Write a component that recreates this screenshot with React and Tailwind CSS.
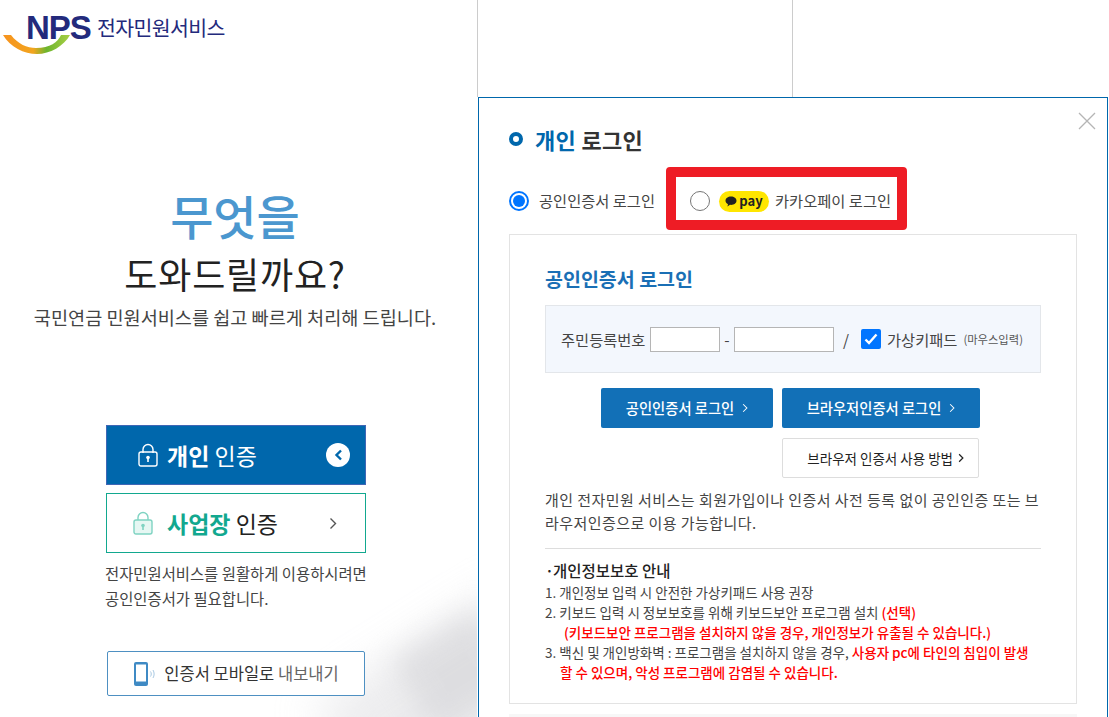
const F = { fontFamily: '"Noto Sans CJK KR", "Liberation Sans", sans-serif' };

const Lock = ({ color, body }) => (
  <svg width="20" height="24" viewBox="0 0 20 24" fill="none" className="shrink-0">
    <path d="M5 10V6.500a5 5 0 0 1 10 0V10" stroke={color} strokeWidth="1.400" />
    <rect x="1" y="9" width="18" height="14" rx="2" stroke={color} strokeWidth="1.400" fill={body} />
    <circle cx="10" cy="14.500" r="1.800" fill={color} />
    <rect x="9.200" y="15" width="1.600" height="4" fill={color} />
  </svg>
);

const Chevron = ({ className = "", color = "currentColor", w = 1.4 }) => (
  <svg viewBox="0 0 8 12" className={className} fill="none">
    <path d="M1.500 1l5 5-5 5" stroke={color} strokeWidth={w} />
  </svg>
);

function Logo() {
  return (
    <div className="relative h-[70px]">
      <svg width="80" height="60" viewBox="0 0 80 60" className="absolute left-0 top-0">
        <defs>
          <linearGradient id="sw" x1="0" x2="1" y1="0" y2="0">
            <stop offset="0" stopColor="#f7931e" />
            <stop offset="0.45" stopColor="#f2a51f" />
            <stop offset="0.65" stopColor="#6db52e" />
            <stop offset="1" stopColor="#a8cf45" />
          </linearGradient>
        </defs>
        <path d="M3 35h8c7 9 16 13 25 13 14 0 22-6 25-13h9c-6 11-20 19-33 19C24 54 10 47 3 35z" fill="url(#sw)" />
      </svg>
      <div className="absolute left-[26px] top-[10px] text-[33px] leading-[36px] font-bold tracking-[-1px] text-[#232a7c]" style={{ fontFamily: '"Liberation Sans", sans-serif' }}>NPS</div>
      <div className="absolute left-[97px] top-[11px] text-[20.500px] leading-[32px] tracking-[-0.6px] text-[#232a7c]">전자민원서비스</div>
    </div>
  );
}

function LeftColumn() {
  return (
    <aside className="relative w-[477px] shrink-0 overflow-hidden bg-white text-center">
      <div className="absolute right-[-80px] bottom-[-40px] h-[120px] w-[230px] rotate-[-32deg] bg-[#d2d2d6] opacity-40 blur-[22px]" />
      <div className="absolute right-[-30px] bottom-[0px] h-[90px] w-[100px] rotate-[-32deg] bg-[#cfcfd3] opacity-50 blur-[14px]" />
      <div className="relative">
        <div className="text-left"><Logo /></div>
        <div className="ml-[-4px] w-[478px]">
          <h1 className="mt-[113px] text-[47px] leading-[64px] font-medium text-[#4b97cf]">무엇을</h1>
          <p className="mt-[2px] text-[36px] leading-[48px] tracking-[0.8px] text-[#222]">도와드릴까요?</p>
          <p className="mt-[6px] text-[18.600px] leading-[28px] text-[#444]">국민연금 민원서비스를 쉽고 빠르게 처리해 드립니다.</p>
        </div>
        <div className="ml-[106px] mt-[94px] w-[260px]">
          <div className="flex h-[60px] items-center border border-[#3f66b5] bg-[#0067ac] pl-[31px] pr-[15px] text-white">
            <Lock color="#fff" />
            <span className="ml-[9px] text-[23px]"><b className="font-bold">개인</b> 인증</span>
            <span className="ml-auto flex h-[24px] w-[24px] items-center justify-center rounded-full bg-white">
              <svg width="9" height="12" viewBox="0 0 9 12" fill="none"><path d="M7 1.500L2.500 6 7 10.500" stroke="#0067ac" strokeWidth="2.400" /></svg>
            </span>
          </div>
          <div className="mt-[8px] flex h-[60px] items-center border border-[#12a88f] bg-white pl-[26px] pr-[28px] text-[#222]">
            <Lock color="#7fd3c2" body="#e6f7f3" />
            <span className="ml-[14px] text-[23px]"><b className="font-bold text-[#12a88f]">사업장</b> 인증</span>
            <Chevron className="ml-auto h-[13px] w-[8px]" color="#555" />
          </div>
          <p className="mt-[8px] ml-[-1px] w-[280px] text-left text-[15.400px] leading-[25px] text-[#444]">전자민원서비스를 원활하게 이용하시려면<br />공인인증서가 필요합니다.</p>
          <div className="mt-[40px] ml-[1px] flex h-[45px] w-[258px] items-center justify-center gap-[9px] rounded-[2px] border border-[#4e90c2] bg-white text-[16.500px] text-[#333]">
            <svg width="22" height="26" viewBox="0 0 22 26" fill="none" className="shrink-0">
              <rect x="1" y="1" width="14" height="24" rx="2" fill="#3f8ac4" />
              <rect x="3" y="3.500" width="10" height="17" fill="#fff" />
              <path d="M17.500 10.500c1 1.500 1 3.500 0 5M20 9c1.500 2.500 1.500 5.500 0 8" stroke="#a9c9e2" strokeWidth="1" />
            </svg>
            <span>인증서 모바일로 <span className="text-[#666]">내보내기</span></span>
          </div>
        </div>
      </div>
    </aside>
  );
}

function Radio({ checked }) {
  return checked ? (
    <span className="mt-[5px] flex h-[20px] w-[20px] shrink-0 items-center justify-center rounded-full border-2 border-[#0075ff] bg-white">
      <span className="h-[12px] w-[12px] rounded-full bg-[#0075ff]" />
    </span>
  ) : (
    <span className="mt-[5px] h-[20px] w-[20px] shrink-0 rounded-full border border-[#767676] bg-white" />
  );
}

function Panel() {
  return (
    <section className="relative ml-[1px] h-[620px] w-[630px] border-x border-t border-[#0067ac] bg-white pl-[30px]">
      <svg width="18" height="18" viewBox="0 0 18 18" className="absolute right-[11px] top-[14px]" fill="none">
        <path d="M1 1l16 16M17 1L1 17" stroke="#b5b5b5" strokeWidth="1.300" />
      </svg>
      <div className="mt-[10px] flex h-[42px] items-center pt-[20px]">
        <span className="h-[14px] w-[14px] rounded-full border-[4px] border-[#0067ac]" />
        <h2 className="ml-[12px] text-[22px] tracking-[0.3px] font-bold text-[#333]"><span className="text-[#0067ac]">개인</span> 로그인</h2>
      </div>
      <div className="mt-[17px] flex items-center">
        <Radio checked />
        <span className="ml-[10px] mt-[4px] text-[15.300px] text-[#444]">공인인증서 로그인</span>
        <div className="ml-[11px] flex h-[63px] w-[241px] items-center rounded-[4px] border-[10px] border-[#ee1c25] bg-white pl-[14px]">
          <Radio />
          <span className="ml-[9px] mt-[5px] flex h-[21px] w-[50px] shrink-0 items-center justify-center gap-[2px] rounded-full bg-[#ffe600] text-[13px] font-bold text-[#222]">
            <svg width="12" height="11" viewBox="0 0 12 11"><path d="M6 .5C2.900.5.500 2.300.5 4.700c0 1.500 1 2.800 2.500 3.500L2.400 10.500 5 8.800c.3 0 .7.100 1 .1 3.100 0 5.500-1.900 5.500-4.200S9.100.5 6 .5z" fill="#222" /></svg>
            pay
          </span>
          <span className="ml-[6px] mt-[4px] whitespace-nowrap text-[15.300px] text-[#444]">카카오페이 로그인</span>
        </div>
      </div>
      <div className="mt-[4px] h-[470px] w-[568px] border border-[#e3e3e3] px-[35px] pt-[28px]">
        <h3 className="text-[19.500px] leading-[32px] font-bold text-[#1a6fb5]">공인인증서 로그인</h3>
        <div className="mt-[10px] flex h-[68px] w-[496px] items-center whitespace-nowrap border border-[#e3e6ea] bg-[#f3f7fd] pl-[15px] text-[15.300px] text-[#444]">
          <span className="w-[84px]">주민등록번호</span>
          <span className="ml-[5px] h-[25px] w-[70px] border border-[#b5b5b5] bg-white" />
          <span className="mx-[4px] w-[6px] text-center">-</span>
          <span className="h-[25px] w-[100px] border border-[#b5b5b5] bg-white" />
          <span className="ml-[9px]">/</span>
          <span className="ml-[12px] flex h-[20px] w-[20px] items-center justify-center rounded-[2px] bg-[#0075ff]">
            <svg width="14" height="12" viewBox="0 0 14 12" fill="none"><path d="M1.500 6.500L5 10l7.500-8.500" stroke="#fff" strokeWidth="2.400" /></svg>
          </span>
          <span className="ml-[6px]">가상키패드</span>
          <span className="ml-[6px] text-[11.300px] text-[#555]">(마우스입력)</span>
        </div>
        <div className="mt-[15px] ml-[56px] grid w-[379px] grid-cols-[172px_198px] gap-x-[9px] gap-y-[10px]">
          <div className="flex h-[40px] items-center justify-center gap-[8px] rounded-[2px] bg-[#1270b7] text-[14.300px] font-medium text-white">공인인증서 로그인 <Chevron className="h-[10px] w-[6px]" color="#fff" /></div>
          <div className="flex h-[40px] items-center justify-center gap-[8px] rounded-[2px] bg-[#1270b7] text-[14.300px] font-medium text-white">브라우저인증서 로그인 <Chevron className="h-[10px] w-[6px]" color="#fff" /></div>
          <div className="col-start-2 flex h-[40px] w-[197px] items-center justify-end gap-[5px] rounded-[2px] border border-[#ddd] bg-white pr-[14px] text-[13.500px] text-[#222]">브라우저 인증서 사용 방법 <Chevron className="h-[10px] w-[6px]" color="#222" w={1.6} /></div>
        </div>
        <p className="mt-[10px] w-[496px] break-all text-[15px] leading-[23px] tracking-[0.45px] text-[#444]">개인 전자민원 서비스는 회원가입이나 인증서 사전 등록 없이 공인인증 또는 브라우저인증으로 이용 가능합니다.</p>
        <div className="mt-[14px] w-[496px] border-t border-[#ddd] pt-[10px] text-[13.500px] leading-[20px] text-[#444]">
          <p className="mb-[1px] text-[15.500px] leading-[22px] font-medium text-[#222]">·<span className="ml-[-1px]">개인정보보호 안내</span></p>
          <p>1. 개인정보 입력 시 안전한 가상키패드 사용 권장</p>
          <p>2. 키보드 입력 시 정보보호를 위해 키보드보안 프로그램 설치 <span className="font-medium text-[#f00]">(선택)</span></p>
          <p className="pl-[19px] font-medium text-[#f00]">(키보드보안 프로그램을 설치하지 않을 경우, 개인정보가 유출될 수 있습니다.)</p>
          <p className="whitespace-nowrap">3. 백신 및 개인방화벽 : 프로그램을 설치하지 않을 경우, <span className="font-medium text-[#f00]">사용자 pc에 타인의 침입이 발생</span></p>
          <p className="pl-[15px] font-medium text-[#f00]">할 수 있으며, 악성 프로그램에 감염될 수 있습니다.</p>
        </div>
      </div>
      <div className="mt-[10px] h-[40px] w-[568px] bg-[#f7f7f7]" />
    </section>
  );
}

export default function App() {
  return (
    <div className="flex h-[717px] w-[1109px] overflow-hidden bg-white" style={F}>
      <LeftColumn />
      <main className="flex-1">
        <div className="flex h-[97px] border-l border-[#ccc]">
          <div className="w-[315px] border-r border-[#ccc]" />
        </div>
        <Panel />
      </main>
    </div>
  );
}
